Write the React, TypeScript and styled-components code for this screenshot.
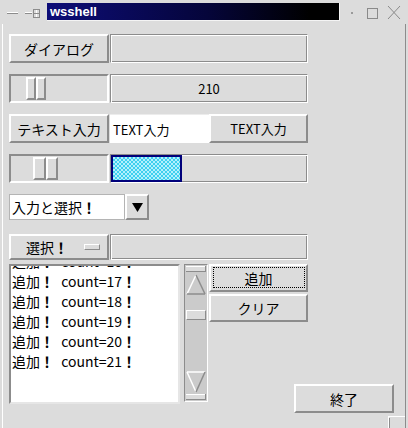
import React from 'react';
import styled, { createGlobalStyle } from 'styled-components';

const BG = '#dcdcdc';
const DARK = '#8c8c8c';
const LIGHT = '#ffffff';
const TROUGH = '#cbcbcb';
const FONT = `"Noto Sans CJK JP", "Liberation Sans", sans-serif`;

const Global = createGlobalStyle`
  html, body { margin: 0; padding: 0; background: ${BG}; }
  body { font-family: ${FONT}; color: #000; }
  * { box-sizing: border-box; }
`;

const Window = styled.div`
  position: relative;
  width: 408px;
  height: 428px;
  background: ${BG};
  display: flex;
  flex-direction: column;
  overflow: hidden;
`;

const TitleBar = styled.div`
  height: 24px;
  flex-shrink: 0;
  display: flex;
  align-items: center;
`;

const TitleIcons = styled.div`
  width: 47px;
  height: 24px;
  display: flex;
  flex-shrink: 0;
`;

const TitleText = styled.div`
  width: 293px;
  height: 18px;
  flex-shrink: 0;
  background: linear-gradient(to right, #0d0d78 0%, #05053a 55%, #000 90%);
  border-right: 1px solid #f4f4f4;
  border-bottom: 1px solid #f4f4f4;
  color: #fff;
  font: bold 13px "Liberation Sans", Arial, sans-serif;
  line-height: 17px;
  padding-left: 3px;
`;

const WinButtons = styled.div`
  width: 68px;
  height: 24px;
  display: flex;
  flex-shrink: 0;
`;

const Client = styled.div`
  flex: 1;
  margin: 0 2px;
  border-left: 1px solid ${LIGHT};
  border-right: 1px solid ${DARK};
  padding: 10px 0 0 6px;
  display: flex;
  flex-direction: column;
`;

const Row = styled.div<{ $h: number; $mt: number }>`
  display: flex;
  width: 299px;
  height: ${(p) => p.$h}px;
  margin-top: ${(p) => p.$mt}px;
  flex-shrink: 0;
`;

const Button = styled.button<{ $w: number }>`
  width: ${(p) => p.$w}px;
  height: 100%;
  flex-shrink: 0;
  margin: 0;
  padding: 0;
  background: ${BG};
  border: 2px solid;
  border-color: ${LIGHT} ${DARK} ${DARK} ${LIGHT};
  font: 14px ${FONT};
  color: #000;
  display: flex;
  align-items: center;
  justify-content: center;
  position: relative;
`;

const DefaultButton = styled(Button)`
  &::after {
    content: '';
    position: absolute;
    top: 1px;
    left: 2px;
    right: 1px;
    bottom: 2px;
    border: 1px dotted #000;
  }
`;

const SmallText = styled.span`
  font: 13px ${FONT};
`;

const Etched = styled.div`
  flex: 1;
  margin-left: 1px;
  height: 100%;
  border: 1px solid;
  border-color: ${DARK} ${LIGHT} ${LIGHT} ${DARK};
  box-shadow: inset 1px 1px 0 ${LIGHT}, inset -1px -1px 0 ${DARK};
  display: flex;
  align-items: center;
  justify-content: center;
`;

const ProgressPanel = styled(Etched)`
  justify-content: flex-start;
  align-items: stretch;
`;

const Progress = styled.div`
  width: 71px;
  border: 2px solid #00007a;
  background: repeating-conic-gradient(#3ecff0 0 25%, #b4f0fc 0 50%) 0 0 / 4px 4px;
`;

const Groove = styled.div`
  position: relative;
  width: 100px;
  height: 100%;
  flex-shrink: 0;
  border: 2px solid;
  border-color: ${DARK} ${LIGHT} ${LIGHT} ${DARK};
`;

const Thumb = styled.div`
  position: absolute;
  top: 1px;
  bottom: 1px;
  display: flex;
`;

const ThumbHalf = styled.div`
  flex: 1;
  border: 2px solid;
  border-color: ${LIGHT} ${DARK} ${DARK} ${LIGHT};
  background: ${BG};
`;

const TextField = styled.div`
  width: 99px;
  height: 100%;
  flex-shrink: 0;
  margin-left: 1px;
  background: #fff;
  border-top: 1px solid #ececec;
  padding-left: 3px;
  display: flex;
  align-items: center;
`;

const Combo = styled.div`
  display: flex;
  height: 100%;
`;

const ComboField = styled.div`
  width: 116px;
  height: 100%;
  background: #fff;
  border: 1px solid #b4b4b4;
  padding-left: 2px;
  display: flex;
  align-items: center;
  font-size: 14px;
`;

const ComboArrow = styled.div`
  width: 24px;
  height: 100%;
  background: ${BG};
  border: 2px solid;
  border-color: ${LIGHT} ${DARK} ${DARK} ${LIGHT};
  display: flex;
  align-items: center;
  justify-content: center;
`;

const OptionButton = styled(Button)`
  justify-content: flex-start;
  padding-left: 15px;
`;

const Indicator = styled.span`
  width: 16px;
  height: 6px;
  margin-left: 16px;
  border: 1px solid;
  border-color: ${LIGHT} ${DARK} ${DARK} ${LIGHT};
  background: ${BG};
`;

const Bang = styled.span`
  font-weight: bold;
`;

const BottomRow = styled.div`
  display: flex;
  margin-top: 4px;
  height: 149px;
  flex-shrink: 0;
`;

const ListBox = styled.div`
  width: 171px;
  height: 140px;
  flex-shrink: 0;
  background: #fff;
  border: 2px solid;
  border-color: ${DARK} #e6e6e6 #e6e6e6 ${DARK};
  overflow: hidden;
  padding-left: 1px;
`;

const ListInner = styled.div`
  margin-top: -15px;
`;

const ListItem = styled.div`
  height: 20px;
  line-height: 20px;
  font-size: 14px;
  white-space: nowrap;
  word-spacing: 4px;
`;

const ScrollBar = styled.div`
  width: 24px;
  height: 138px;
  margin-left: 4px;
  flex-shrink: 0;
  background: ${TROUGH};
  border: 1px solid;
  border-color: ${DARK} ${LIGHT} ${LIGHT} ${DARK};
  display: flex;
  flex-direction: column;
`;

const ScrollThumb = styled.div`
  height: 10px;
  margin: 15px 1px 0;
  border: 1px solid;
  border-color: ${LIGHT} ${DARK} ${DARK} ${LIGHT};
  background: ${BG};
`;

const Spacer = styled.div`
  flex: 1;
`;

const SideColumn = styled.div`
  width: 185px;
  margin-left: 1px;
  display: flex;
  flex-direction: column;
`;

const SideButton = styled(Button)<{ $mt: number }>`
  height: 28px;
  margin-top: ${(p) => p.$mt}px;
`;

const QuitButton = styled(Button)`
  height: 29px;
  margin-top: auto;
  align-self: flex-end;
`;

const Corner = styled.svg`
  position: absolute;
  right: 0;
  bottom: 0;
`;

function Slider({ pos, thumb }: { pos: number; thumb: number }) {
  return (
    <Groove>
      <Thumb style={{ left: pos, width: thumb }}>
        <ThumbHalf />
        <ThumbHalf />
      </Thumb>
    </Groove>
  );
}

function UpArrow() {
  return (
    <svg width="22" height="30" viewBox="0 0 22 30">
      <rect x="1" y="1" width="20" height="6" fill={BG} />
      <line x1="1" y1="1.5" x2="21" y2="1.5" stroke={LIGHT} />
      <line x1="1" y1="6.5" x2="21" y2="6.5" stroke={DARK} />
      <line x1="20.5" y1="1" x2="20.5" y2="7" stroke={DARK} />
      <polygon points="11,10 2,29 20,29" fill={TROUGH} />
      <line x1="2" y1="29" x2="11" y2="10" stroke={LIGHT} strokeWidth="1.5" />
      <line x1="11" y1="10" x2="20" y2="29" stroke={DARK} strokeWidth="1.5" />
      <line x1="2" y1="29" x2="20" y2="29" stroke={DARK} strokeWidth="1.5" />
    </svg>
  );
}

function DownArrow() {
  return (
    <svg width="22" height="30" viewBox="0 0 22 30">
      <polygon points="2,1 20,1 11,21" fill={TROUGH} />
      <line x1="2" y1="1" x2="20" y2="1" stroke={LIGHT} strokeWidth="1.5" />
      <line x1="2" y1="1" x2="11" y2="21" stroke={LIGHT} strokeWidth="1.5" />
      <line x1="20" y1="1" x2="11" y2="21" stroke={DARK} strokeWidth="1.5" />
      <rect x="1" y="23" width="20" height="6" fill={BG} />
      <line x1="1" y1="23.5" x2="21" y2="23.5" stroke={LIGHT} />
      <line x1="1" y1="28.5" x2="21" y2="28.5" stroke={DARK} />
      <line x1="20.5" y1="23" x2="20.5" y2="29" stroke={DARK} />
    </svg>
  );
}

export default function App() {
  const items = [16, 17, 18, 19, 20, 21];
  return (
    <>
      <Global />
      <Window>
        <TitleBar>
          <TitleIcons>
            <svg width="47" height="24" viewBox="0 0 47 24">
              <line x1="7" y1="12.5" x2="18" y2="12.5" stroke={LIGHT} />
              <line x1="7" y1="13.5" x2="18" y2="13.5" stroke={DARK} />
              <line x1="25" y1="12.5" x2="32" y2="12.5" stroke={LIGHT} />
              <line x1="25" y1="13.5" x2="32" y2="13.5" stroke={DARK} />
              <rect x="33.5" y="9.5" width="6" height="8" fill="none" stroke={DARK} />
              <line x1="36.5" y1="10" x2="36.5" y2="17" stroke={LIGHT} />
              <line x1="34" y1="13.5" x2="39" y2="13.5" stroke={DARK} />
            </svg>
          </TitleIcons>
          <TitleText>wsshell</TitleText>
          <WinButtons>
            <svg width="68" height="24" viewBox="0 0 68 24">
              <rect x="11" y="12" width="2" height="2" fill="#9a9a9a" />
              <rect x="27.5" y="8.5" width="10" height="10" fill="none" stroke="#8a8a8a" />
              <line x1="48" y1="6" x2="60" y2="19" stroke="#8a8a8a" />
              <line x1="60" y1="6" x2="48" y2="19" stroke="#8a8a8a" />
            </svg>
          </WinButtons>
        </TitleBar>
        <Client>
          <Row $h={29} $mt={0}>
            <Button $w={100}>ダイアログ</Button>
            <Etched />
          </Row>
          <Row $h={29} $mt={11}>
            <Slider pos={15} thumb={20} />
            <Etched>
              <SmallText>210</SmallText>
            </Etched>
          </Row>
          <Row $h={29} $mt={11}>
            <Button $w={100}>テキスト入力</Button>
            <TextField>
              <SmallText>TEXT入力</SmallText>
            </TextField>
            <Button $w={99}>
              <SmallText>TEXT入力</SmallText>
            </Button>
          </Row>
          <Row $h={29} $mt={11}>
            <Slider pos={22} thumb={25} />
            <ProgressPanel>
              <Progress />
            </ProgressPanel>
          </Row>
          <Row $h={26} $mt={11}>
            <Combo>
              <ComboField>
                入力と選択<Bang>！</Bang>
              </ComboField>
              <ComboArrow>
                <svg width="11" height="9" viewBox="0 0 11 9">
                  <polygon points="0,0 11,0 5.5,9" fill="#000" />
                </svg>
              </ComboArrow>
            </Combo>
          </Row>
          <Row $h={26} $mt={14}>
            <OptionButton $w={100}>
              選択<Bang>！</Bang>
              <Indicator />
            </OptionButton>
            <Etched />
          </Row>
          <BottomRow>
            <ListBox>
              <ListInner>
                {items.map((n) => (
                  <ListItem key={n}>
                    追加<Bang>！</Bang> count={n}
                    <Bang>！</Bang>
                  </ListItem>
                ))}
              </ListInner>
            </ListBox>
            <ScrollBar>
              <UpArrow />
              <ScrollThumb />
              <Spacer />
              <DownArrow />
            </ScrollBar>
            <SideColumn>
              <DefaultButton as={SideButton} $w={99} $mt={1}>
                追加
              </DefaultButton>
              <SideButton $w={99} $mt={2}>
                クリア
              </SideButton>
              <QuitButton $w={100}>終了</QuitButton>
            </SideColumn>
          </BottomRow>
        </Client>
        <Corner width="20" height="12" viewBox="0 0 20 12">
          <line x1="0.5" y1="1" x2="0.5" y2="12" stroke={LIGHT} />
          <line x1="0" y1="0.5" x2="17" y2="0.5" stroke={LIGHT} />
          <line x1="1.5" y1="2" x2="1.5" y2="12" stroke={DARK} />
        </Corner>
      </Window>
    </>
  );
}
